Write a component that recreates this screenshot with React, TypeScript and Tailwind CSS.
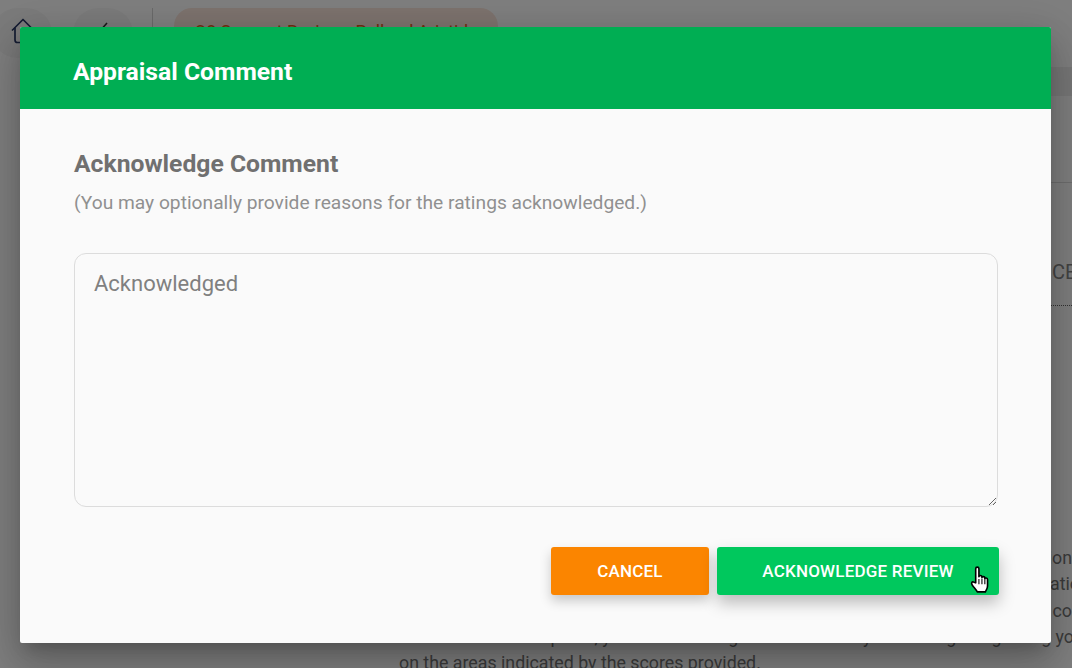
export default function App() {
  return (
    <div className="relative h-[668px] w-[1072px] overflow-hidden bg-white font-['Roboto',sans-serif] text-[#333]">
      {/* page behind */}
      <div className="flex h-[67px] items-start bg-white">
        <div className="ml-[-8px] mt-[8px] flex h-[50px] w-[60px] items-center justify-center rounded-full bg-[#f7f7f7]">
          <svg width="26" height="28" viewBox="0 0 26 28" fill="none" stroke="#2a3a66" strokeWidth="1.7" strokeLinejoin="round" className="ml-[2px] mt-[-5px]">
            <path d="M2 13.5 13 2.5l11 11" />
            <path d="M5 10.5V23q0 2.5 2.5 2.5H19" />
          </svg>
        </div>
        <div className="ml-[21px] mt-[8px] flex h-[50px] w-[60px] items-center justify-center rounded-full bg-[#f7f7f7]">
          <svg width="14" height="24" viewBox="0 0 14 24" fill="none" stroke="#333" strokeWidth="1.6" className="mt-[-3px]">
            <path d="M11 3 3 12l8 9" />
          </svg>
        </div>
        <div className="ml-[19px] mt-[8px] h-[50px] w-px bg-[#d4d4d4]" />
        <div className="ml-[21px] mt-[8px] flex h-[50px] w-[324px] justify-center rounded-[18px] bg-[#fbe6dc] pt-[11px] text-[17.5px] text-[#e0601f]">
          Q3 Support Review - Pelland Aristide
        </div>
      </div>
      <div className="ml-[399px] h-[29px] bg-[#eeeeee]" />
      <div className="ml-[399px] h-[87px] border-b border-[#dcdcdc]" />
      <div className="ml-[399px] flex h-[123px] flex-col items-end border-b border-dotted border-[#666]">
        <div className="mt-[77px] w-[20px] overflow-hidden whitespace-nowrap text-[20px] leading-[24px] text-[#888]">CE</div>
      </div>
      <div className="ml-[399px] mt-[239px] w-[673px] whitespace-nowrap text-[17.8px] leading-[26.3px] text-[#777]">
        <div className="text-right">Your appraisal has been completed and the ratings are based on discussion</div>
        <div className="mr-[-8px] text-right">of your performance with the manager for this evaluatio</div>
        <div className="text-right">Please read the comments carefully and use them to co</div>
        <div className="mr-[-2px] text-right">improve; you are encouraged to work with your manager regarding yo</div>
        <div>on the areas indicated by the scores provided.</div>
      </div>

      {/* backdrop + dialog */}
      <div className="absolute inset-0 bg-black/50">
        <div className="ml-[20px] mt-[27px] flex h-[616px] w-[1031px] flex-col overflow-hidden rounded-[2px] bg-[#fafafa] shadow-[0_11px_15px_-7px_rgba(0,0,0,0.2),0_24px_38px_3px_rgba(0,0,0,0.14),0_9px_46px_8px_rgba(0,0,0,0.12)]">
          <div className="flex h-[82px] shrink-0 items-start bg-[#00ae53] pl-[53px] pt-[30px] text-[24.7px] font-bold leading-[30px] text-white">
            Appraisal Comment
          </div>
          <div className="flex flex-1 flex-col pl-[54px] pr-[52px]">
            <h2 className="mt-[39px] text-[24.7px] font-bold leading-[32px] text-[#707070]">Acknowledge Comment</h2>
            <p className="mt-[11px] text-[19.2px] leading-[24px] text-[#909090]">(You may optionally provide reasons for the ratings acknowledged.)</p>
            <textarea
              readOnly
              placeholder="Acknowledged"
              className="mt-[38px] h-[254px] w-[924px] rounded-[12px] border border-[#dcdcdc] bg-transparent px-[19px] py-[15px] text-[22px] leading-[30px] text-[#808080] outline-none placeholder:text-[#808080]"
            />
            <div className="mt-[40px] flex justify-end gap-[8px]">
              <button className="h-[48px] w-[158px] rounded-[3px] bg-[#fb8500] pt-[2px] text-[17px] font-medium tracking-[0.2px] text-white shadow-[0_6px_12px_rgba(0,0,0,0.2)]">
                CANCEL
              </button>
              <button className="h-[48px] w-[282px] rounded-[3px] bg-[#00c85d] pt-[2px] text-[17px] font-medium tracking-[0.2px] text-white shadow-[0_8px_16px_rgba(0,0,0,0.25)]">
                <span>ACKNOWLEDGE REVIEW</span>
              </button>
            </div>
          </div>
        </div>
      </div>

      {/* mouse cursor */}
      <svg width="22" height="28" viewBox="0 0 20 26" className="absolute left-[969px] top-[566px]">
        <path
          d="M6 2.5c0-2 3-2 3 0v7.5c0-1.6 2.8-1.6 2.8 0v1c0-1.5 2.7-1.5 2.7.2v.8c0-1.3 2.5-1.2 2.5.6v5.9c0 2.6-1.4 4-2 5.5H7.5c-1-2-2.7-3.6-4.6-6.2-1.5-2-.2-3.8 1.5-2.8L6 15.6Z"
          fill="#fff"
          stroke="#000"
          strokeWidth="1.5"
          strokeLinejoin="round"
        />
        <path d="M9 12v5M11.8 12v5M14.5 12.5v4.5" stroke="#000" strokeWidth="1" fill="none" />
      </svg>
    </div>
  );
}
